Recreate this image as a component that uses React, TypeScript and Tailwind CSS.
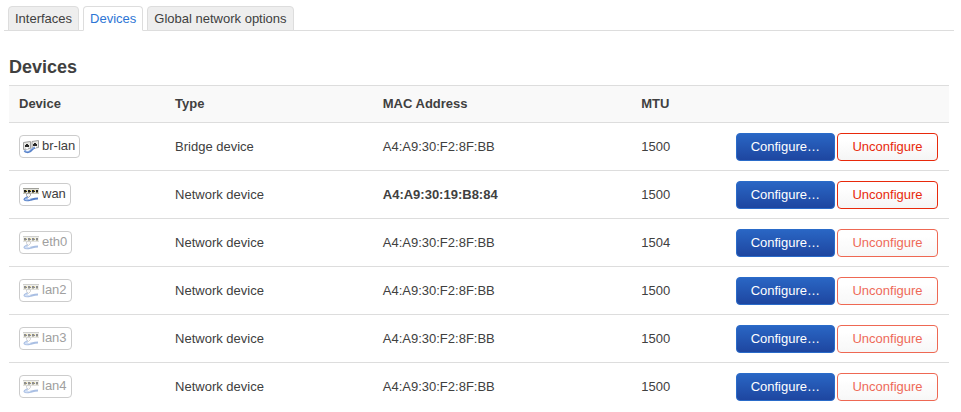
const tabs = ['Interfaces', 'Devices', 'Global network options']

const devices = [
  { name: 'br-lan', type: 'Bridge device', mac: 'A4:A9:30:F2:8F:BB', mtu: 1500, up: true, configured: true, custom: false },
  { name: 'wan', type: 'Network device', mac: 'A4:A9:30:19:B8:84', mtu: 1500, up: true, configured: true, custom: true },
  { name: 'eth0', type: 'Network device', mac: 'A4:A9:30:F2:8F:BB', mtu: 1504, up: false, configured: false, custom: false },
  { name: 'lan2', type: 'Network device', mac: 'A4:A9:30:F2:8F:BB', mtu: 1500, up: false, configured: false, custom: false },
  { name: 'lan3', type: 'Network device', mac: 'A4:A9:30:F2:8F:BB', mtu: 1500, up: false, configured: false, custom: false },
  { name: 'lan4', type: 'Network device', mac: 'A4:A9:30:F2:8F:BB', mtu: 1500, up: false, configured: false, custom: false },
]

function BridgeIcon() {
  return (
    <svg aria-hidden="true" viewBox="0 0 16 16" className="size-4 shrink-0">
      <path d="M.5 4.500l7-1v7l-7 1z" fill="#e8e8e4" stroke="#a0a0a0" />
      <path d="M9 3.500l6.500-1v7l-6.500 1z" fill="#e8e8e4" stroke="#a0a0a0" />
      <path d="M2 7h1V6h2v1h1v2H2z" fill="#282828" />
      <path d="M10 6h1V5h2v1h1v2h-4z" fill="#282828" />
      <path d="M3 9h2v2H3zM11 8h2v2h-2z" fill="#fafafa" />
      <path d="M1.500 12.500c1 2 4 2 5.500 1s2.500-3.500 5-4" fill="none" stroke="#5680c8" strokeWidth="2" />
      <path d="M2 12.500c1 1.200 3.300 1.200 4.500.3s2.500-2.800 5-3.300" fill="none" stroke="#a6c2ee" strokeWidth=".8" />
    </svg>
  )
}

function SwitchIcon() {
  return (
    <svg aria-hidden="true" viewBox="0 0 16 16" className="size-4 shrink-0">
      <path d="M0 2h16v6H0z" fill="#e0e0d8" />
      <path d="M0 2.500h16" stroke="#a0a09a" />
      <path d="M0 7.500h16" stroke="#c4c4be" />
      <path d="M1 4h3v2H1zM5 4h3v2H5zM9 4h3v2H9zM13 4h2v2h-2z" fill="#202020" />
      <path d="M1 6h2v1H1zM5 6h2v1H5zM9 6h2v1H9zM13 6h2v1h-2z" fill="#86825c" />
      <path d="M3 4h1v1H3zM7 4h1v1H7zM11 4h1v1h-1z" fill="#d8bc38" />
      <path d="M3.500 7.500h4v2l-2 2-2-2z" fill="#f4f4f4" stroke="#a8a8a8" />
      <path d="M4.500 11c-1 1.200-3 1.200-3 2.500 1 1.500 4 .8 6 .3s4-1.300 7.500-1.300" fill="none" stroke="#5680c8" strokeWidth="2" />
      <path d="M4.500 11.700c-1 .8-2.500.8-2.500 1.800 1 .8 3.500.2 5.500-.3" fill="none" stroke="#b4ccf4" strokeWidth="1" />
    </svg>
  )
}

export default function App() {
  return (
    <main className="px-1 pt-1.5 font-['Liberation_Sans',Arial,sans-serif] text-[13px] leading-[18px] text-[#404040]">
      <nav className="mr-[3px] flex border-b border-[#ddd] px-1">
        {tabs.map(tab => (
          <a
            key={tab}
            href="#"
            aria-current={tab === 'Devices' ? 'page' : undefined}
            className={
              tab === 'Devices'
                ? 'mr-1 -mb-px rounded-t border border-[#ddd] border-b-white bg-white px-1.5 pt-[3px] pb-0.5 text-[#2d75d5]'
                : 'mr-1 -mb-px rounded-t border border-[#ddd] bg-[#eee] px-1.5 pt-[3px] pb-0.5'
            }
          >
            {tab}
          </a>
        ))}
      </nav>

      <section className="mt-[18px] mr-2 ml-[5px]">
        <h3 className="text-lg leading-9 font-bold">Devices</h3>
        <table className="w-full table-fixed border-collapse text-left">
          <colgroup>
            <col className="w-[16.6%]" />
            <col className="w-[22.1%]" />
            <col className="w-[27.5%]" />
            <col className="w-[9%]" />
            <col />
          </colgroup>
          <thead>
            <tr className="h-[37px] border-t border-[#ddd] bg-[#f9f9f9]">
              <th className="px-2.5">Device</th>
              <th className="px-2.5">Type</th>
              <th className="px-2.5">MAC Address</th>
              <th className="px-2.5">MTU</th>
              <th aria-label="Actions" />
            </tr>
          </thead>
          <tbody>
            {devices.map(device => (
              <tr key={device.name} className="h-12 border-t border-[#ddd]">
                <td className="px-2.5">
                  <span
                    className={`inline-flex items-center gap-[3px] rounded border border-[#ccc] bg-white pt-px pr-1 pb-0.5 pl-[3px] align-middle ${
                      device.up ? '' : 'text-[#a0a0a0]'
                    }`}
                  >
                    <span className={device.up ? '' : 'opacity-50'}>
                      {device.name === 'br-lan' ? <BridgeIcon /> : <SwitchIcon />}
                    </span>
                    {device.name}
                  </span>
                </td>
                <td className="px-2.5">{device.type}</td>
                <td className={device.custom ? 'px-2.5 font-bold' : 'px-2.5'}>{device.mac}</td>
                <td className="px-2.5">{device.mtu}</td>
                <td className="pr-[11px]">
                  <div className="flex justify-end gap-0.5">
                    <button
                      type="button"
                      className="rounded border border-[#2a6bc9] bg-linear-to-b from-[#2a66c4] to-[#1e46a0] px-3.5 py-1 text-white"
                    >
                      Configure…
                    </button>
                    <button
                      type="button"
                      disabled={!device.configured}
                      className="min-w-[101px] rounded border border-[#e8290b] bg-linear-to-b from-white from-25% to-[#f5f5f5] px-3.5 py-1 text-[#e8290b] disabled:opacity-70"
                    >
                      Unconfigure
                    </button>
                  </div>
                </td>
              </tr>
            ))}
          </tbody>
        </table>
      </section>
    </main>
  )
}
